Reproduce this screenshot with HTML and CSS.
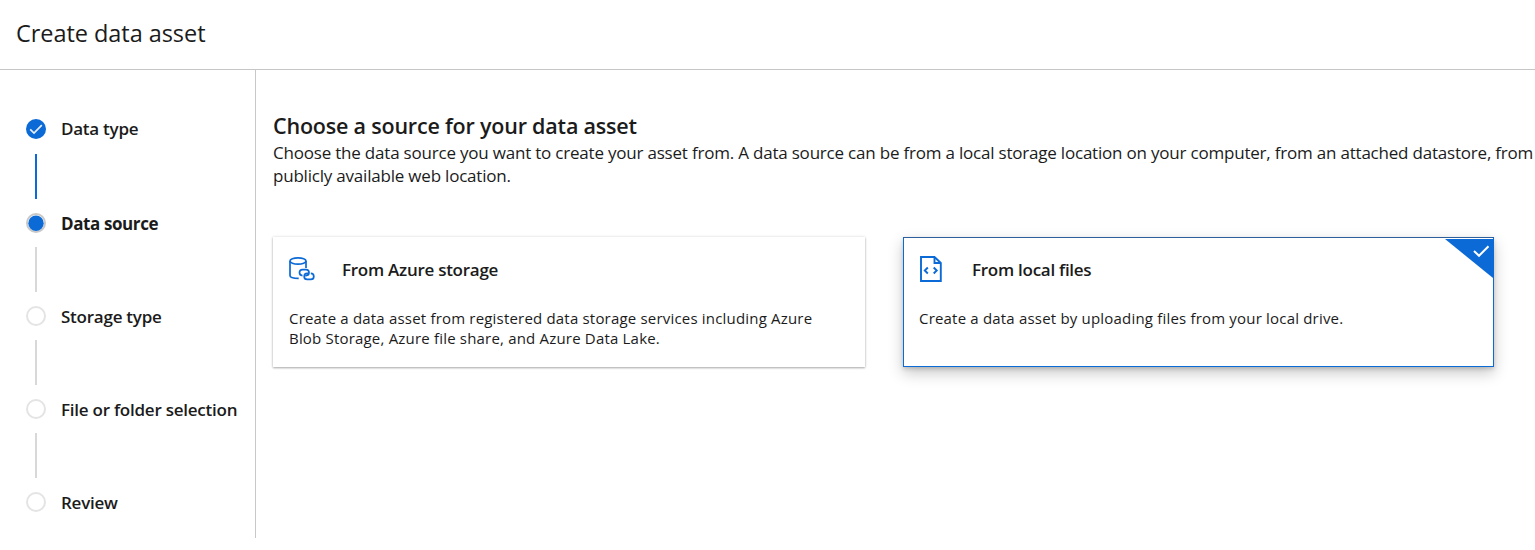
FILE: index.html
```html
<!DOCTYPE html>
<html lang="en">
<head>
<meta charset="utf-8">
<title>Create data asset</title>
<link rel="stylesheet" href="styles.css">
</head>
<body>
<header class="header"><h1 class="title">Create data asset</h1></header>
<div class="layout">
  <nav class="steps">
    <div class="step">
      <svg class="dot" viewBox="0 0 20 20"><circle cx="10" cy="10" r="10" fill="#0b6ad6"/><path d="M4.200 10.300 8 14 15.800 6.200" fill="none" stroke="#e8eef6" stroke-width="1.700"/></svg>
      <span class="label">Data type</span>
    </div>
    <div class="line done"></div>
    <div class="step current">
      <svg class="dot" viewBox="0 0 20 20"><circle cx="10" cy="10" r="9" fill="#fff" stroke="#c8c8c8" stroke-width="2"/><circle cx="10" cy="10.300" r="7.700" fill="#0b6ad6"/></svg>
      <span class="label">Data source</span>
    </div>
    <div class="line"></div>
    <div class="step"><span class="dot empty"></span><span class="label">Storage type</span></div>
    <div class="line"></div>
    <div class="step"><span class="dot empty"></span><span class="label">File or folder selection</span></div>
    <div class="line"></div>
    <div class="step"><span class="dot empty"></span><span class="label">Review</span></div>
  </nav>
  <main class="main">
    <h2 class="heading">Choose a source for your data asset</h2>
    <p class="intro">Choose the data source you want to create your asset from. A data source can be from a local storage location on your computer, from an attached datastore, from<br>publicly available web location.</p>
    <div class="cards">
      <section class="card">
        <div class="card-head">
          <svg class="icon" width="26" height="24" viewBox="0 0 26 24" fill="none" stroke="#0b6ad6" stroke-width="1.700"><ellipse cx="9" cy="4" rx="8" ry="3.100"/><path d="M1 4v14.500c0 1.900 3.200 2.900 8.700 2.900M17 4v7"/><path d="M13.500 18.600a3 3 0 0 1 0-6h3.500a3 3 0 0 1 3 3c0 1.900-1.300 3-3 3h-.8"/><path d="M21.800 16.400a3 3 0 0 1 0 6h-3.600a3 3 0 0 1-3-3c0-1.900 1.300-3 3-3h.8"/></svg>
          <h3 class="name">From Azure storage</h3>
        </div>
        <p class="text">Create a data asset from registered data storage services including Azure<br>Blob Storage, Azure file share, and Azure Data Lake.</p>
      </section>
      <section class="card selected">
        <svg class="corner" width="48" height="39" viewBox="0 0 48 39"><path d="M0 0H48V39Z" fill="#0b6ad6"/><path d="M29 12 34 16.800 43.500 7.300" fill="none" stroke="#fff" stroke-width="2"/></svg>
        <div class="card-head">
          <svg class="icon file" width="22" height="26" viewBox="0 0 22 26" fill="none" stroke="#0b6ad6" stroke-width="1.900"><path d="M1 1h13.500L20.800 7v18H1Z"/><path d="M14.500 1v6h6"/><path d="M7.800 11.500 4.800 14.500 7.800 17.500M13.700 11.500 16.700 14.500 13.700 17.500"/></svg>
          <h3 class="name">From local files</h3>
        </div>
        <p class="text">Create a data asset by uploading files from your local drive.</p>
      </section>
    </div>
  </main>
</div>
</body>
</html>
```
FILE: styles.css
```css
* { box-sizing: border-box; }
body {
  margin: 0;
  height: 550px;
  overflow: hidden;
  background: #fff;
  color: #1b1b1b;
  font-family: "Open Sans", "Noto Sans", sans-serif;
}
h1, h2, h3, p { margin: 0; white-space: nowrap; }
.header {
  height: 70px;
  padding: 18px 16px 0;
  border-bottom: 1px solid #c6c6c6;
}
.title { font-size: 23.5px; line-height: 30px; font-weight: 400; letter-spacing: -0.05px; }
.layout { display: flex; height: 468px; }
.steps {
  flex: none;
  width: 256px;
  padding: 49px 0 0 26px;
  border-right: 1px solid #c8c8c8;
}
.step { display: flex; align-items: center; gap: 15px; height: 20px; }
.dot { flex: none; display: block; width: 20px; height: 20px; }
.empty { border: 2px solid #e4e4e4; border-radius: 50%; }
.label { font-size: 17px; line-height: 20px; font-weight: 600; white-space: nowrap; letter-spacing: -0.24px; }
.line + .step .label { padding-top: 2px; }
.current .label { font-weight: 700; letter-spacing: -0.4px; }
.line { width: 2px; height: 45px; margin: 14px 0 14px 9px; background: #d8d8d8; }
.line.done { background: #0b6ad6; margin-top: 15px; }
.main { flex: 1; min-width: 0; padding: 42px 0 0 17px; }
.heading { font-size: 21.5px; line-height: 28px; font-weight: 600; letter-spacing: -0.2px; }
.intro { font-size: 17px; line-height: 23px; letter-spacing: -0.205px; padding-top: 1px; }
.cards { display: flex; gap: 38px; margin-top: 50px; }
.card {
  position: relative;
  width: 592px;
  height: 130px;
  padding: 17px 16px;
  background: #fff;
  box-shadow: 0 1px 2px rgba(0,0,0,.3), 0 0 3px rgba(0,0,0,.12);
}
.card.selected {
  width: 591px;
  padding: 16px 15px;
  border: 1px solid #0b6ad6;
  border-top-color: #2c5f9c;
  box-shadow: 0 6px 14px rgba(0,0,0,.22), 0 2px 4px rgba(0,0,0,.16);
}
.card-head { display: flex; align-items: center; height: 30px; }
.icon { flex: none; margin-right: 27px; }
.icon.file { margin: 0 30px 0 1px; }
.name { font-size: 17px; line-height: 24px; padding-top: 2px; font-weight: 600; letter-spacing: -0.27px; }
.text { margin-top: 24px; font-size: 15px; line-height: 20px; letter-spacing: 0.19px; }
.corner { position: absolute; right: 0; top: 1px; }
```
